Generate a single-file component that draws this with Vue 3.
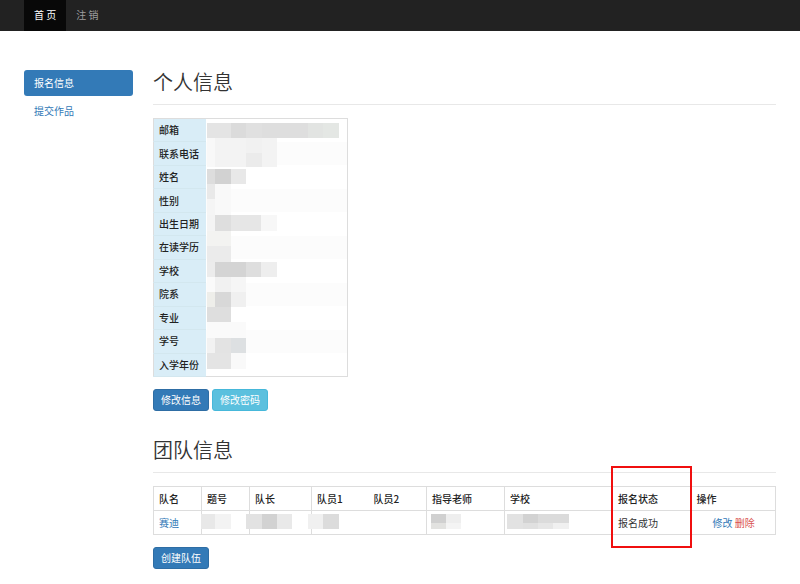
<script setup>
// Each block is [x, y, width, height, grey level]
const profileMask = [
  [0, 5, 24, 15, '#e4e4e4'], [24, 5, 15, 15, '#dbdbdb'], [39, 5, 16, 15, '#e0e0e0'],
  [55, 5, 46, 15, '#dedede'], [101, 5, 15, 15, '#e2e4e2'], [116, 5, 16, 15, '#e4e7e4'],
  [0, 20, 8, 29, '#f8f8f8'], [8, 20, 31, 29, '#f3f3f3'], [39, 20, 16, 15, '#f1f1f1'],
  [55, 20, 15, 29, '#f3f3f3'], [39, 35, 16, 14, '#ebebeb'],
  [0, 51, 8, 15, '#dddddd'], [8, 51, 16, 15, '#d2d2d2'], [24, 51, 15, 15, '#e8e8e8'],
  [0, 66, 8, 15, '#e9e9e9'], [8, 66, 16, 31, '#f9f9f9'], [0, 81, 8, 16, '#f5f5f5'],
  [0, 97, 8, 16, '#f4f4f4'], [8, 97, 16, 16, '#dedede'], [24, 97, 30, 16, '#e6e6e6'], [54, 97, 16, 16, '#f7f7f7'],
  [0, 113, 24, 15, '#f3f3f1'], [0, 128, 24, 16, '#ebebeb'],
  [0, 144, 8, 15, '#ececec'], [8, 144, 31, 15, '#d4d4d4'], [39, 144, 15, 15, '#dedede'], [54, 144, 16, 15, '#eeeeee'],
  [0, 159, 8, 15, '#fafafa'], [8, 159, 16, 15, '#f1f1f1'], [24, 159, 15, 15, '#f6f6f6'],
  [0, 174, 8, 15, '#eeeeea'], [8, 174, 16, 15, '#d8d8d8'], [24, 174, 15, 15, '#f0f0f0'],
  [0, 189, 24, 15, '#dedede'], [0, 204, 39, 16, '#fafafa'],
  [0, 220, 8, 15, '#f2f2f2'], [8, 220, 16, 15, '#e3e3e3'], [24, 220, 15, 15, '#dde0e2'],
  [0, 235, 24, 16, '#e4e4e4'], [24, 235, 15, 16, '#f9f9f9']
]
const teamMask = [
  [48, 0, 14, 15, '#e8e8e8'], [62, 0, 16, 15, '#f3f3f3'],
  [93, 0, 16, 15, '#e2e2e2'], [109, 0, 15, 15, '#d2d2d2'], [124, 0, 15, 15, '#e9e9e9'],
  [155, 0, 15, 15, '#f0f0f0'], [170, 0, 16, 15, '#dcdcdc'],
  [278, 0, 15, 9, '#d0d0d0'], [278, 9, 15, 6, '#e2e2e0'], [293, 0, 15, 9, '#eeeeee'], [293, 9, 15, 6, '#f4f4f4'],
  [354, 0, 16, 15, '#e2e2e2'], [370, 0, 15, 9, '#d2d2d2'], [385, 0, 31, 9, '#dbdbdb'],
  [370, 9, 15, 6, '#e0e0e0'], [385, 9, 15, 6, '#e6e6e6'], [400, 9, 16, 6, '#f0f0f0']
]
const fields = ['邮箱', '联系电话', '姓名', '性别', '出生日期', '在读学历', '学校', '院系', '专业', '学号', '入学年份']
const columns = ['队名', '题号', '队长', '队员1', '队员2', '指导老师', '学校']
</script>

<template>
  <header class="navbar">
    <nav>
      <a class="active" href="#">首 页</a>
      <a href="#">注 销</a>
    </nav>
  </header>

  <div class="layout">
    <aside class="sidebar">
      <a class="active" href="#">报名信息</a>
      <a href="#">提交作品</a>
    </aside>

    <main>
      <section>
        <h1>个人信息</h1>
        <div class="profile-wrap">
          <table class="profile">
            <tbody>
              <tr v-for="field in fields" :key="field">
                <th scope="row">{{ field }}</th>
                <td></td>
              </tr>
            </tbody>
          </table>
          <svg class="mask profile-mask" width="132" height="252" aria-hidden="true">
            <rect v-for="(b, i) in profileMask" :key="i" :x="b[0]" :y="b[1]" :width="b[2]" :height="b[3]" :fill="b[4]" />
          </svg>
        </div>
        <div class="actions">
          <button type="button" class="btn primary">修改信息</button>
          <button type="button" class="btn info">修改密码</button>
        </div>
      </section>

      <section class="team-section">
        <h1>团队信息</h1>
        <div class="team-wrap">
          <table class="team">
            <colgroup>
              <col class="c-name"><col class="c-topic"><col class="c-leader"><col class="c-member">
              <col class="c-member2"><col class="c-teacher"><col class="c-school"><col class="c-status"><col>
            </colgroup>
            <thead>
              <tr>
                <th v-for="(name, i) in columns" :key="i" scope="col">{{ name }}</th>
                <th class="status" scope="col">报名状态<span class="highlight"></span></th>
                <th scope="col">操作</th>
              </tr>
            </thead>
            <tbody>
              <tr>
                <td><a href="#">赛迪</a></td>
                <td></td><td></td><td></td><td></td><td></td><td></td>
                <td>报名成功</td>
                <td class="ops"><a href="#">修改</a> <a class="danger" href="#">删除</a></td>
              </tr>
            </tbody>
          </table>
          <svg class="mask team-mask" width="416" height="15" aria-hidden="true">
            <rect v-for="(b, i) in teamMask" :key="i" :x="b[0]" :y="b[1]" :width="b[2]" :height="b[3]" :fill="b[4]" />
          </svg>
        </div>
        <div class="actions">
          <button type="button" class="btn primary">创建队伍</button>
        </div>
      </section>
    </main>
  </div>
</template>

<style>
body {
  background: #fff;
  color: #333;
  font: 10px/14px "Noto Sans CJK SC", "Noto Sans", sans-serif;
}
</style>

<style scoped>
* {
  box-sizing: border-box;
}
a {
  color: #337ab7;
  text-decoration: none;
}
.navbar {
  background: #222;
  padding: 0 24px;
}
.navbar nav {
  display: flex;
}
.navbar a {
  color: #9d9d9d;
  padding: 8px 10px 9px;
}
.navbar .active {
  background: #080808;
  color: #fff;
}
.layout {
  display: flex;
  align-items: flex-start;
  gap: 20px;
  padding: 39px 24px 14px;
}
.sidebar {
  flex: 0 0 109px;
  display: flex;
  flex-direction: column;
  gap: 2px;
}
.sidebar a {
  padding: 6px 10px;
  border-radius: 3px;
}
.sidebar .active {
  background: #337ab7;
  color: #fff;
}
main {
  flex: 1;
  min-width: 0;
}
h1 {
  margin: 0 0 13px;
  padding-bottom: 10px;
  border-bottom: 1px solid #e8e8e8;
  font-size: 20px;
  line-height: 24px;
  font-weight: 350;
}
table {
  border-collapse: collapse;
}
th,
td {
  padding: 0 5px;
  text-align: left;
  font-weight: 400;
  white-space: nowrap;
}
.profile-wrap,
.team-wrap {
  position: relative;
}
.profile {
  width: 195px;
  height: 259px;
  border: 1px solid #ddd;
  color: #222;
}
.profile th {
  width: 52px;
  background: #d9edf7;
  border-bottom: 1px solid #d3e7ef;
  font-weight: 500;
}
.profile tr:nth-child(even) td {
  background: #fcfcfc;
}
.mask {
  position: absolute;
}
.profile-mask {
  top: 0;
  left: 54px;
}
.team-mask {
  top: 28px;
  left: 0;
}
.actions {
  display: flex;
  gap: 3px;
  margin-top: 12px;
}
.btn {
  height: 22px;
  padding: 0 7px;
  border: 1px solid #2e6da4;
  border-radius: 3px;
  background: #337ab7;
  color: #fff;
  font: inherit;
}
.btn.info {
  border-color: #46b8da;
  background: #5bc0de;
}
.team-section {
  margin-top: 27px;
}
.team {
  width: 100%;
  table-layout: fixed;
}
.team tr {
  height: 24px;
}
.team th,
.team td {
  border: 1px solid #ddd;
}
.team th {
  color: #222;
  font-weight: 500;
}
.team th:nth-child(4),
.team td:nth-child(4) {
  border-right: 0;
}
.team th:nth-child(5),
.team td:nth-child(5) {
  border-left: 0;
}
.team th:nth-child(8),
.team td:nth-child(8) {
  border-right: 0;
}
.team th:nth-child(9),
.team td:nth-child(9) {
  border-left: 0;
}
.c-name,
.c-topic {
  width: 48px;
}
.c-leader {
  width: 62px;
}
.c-member {
  width: 57px;
}
.c-member2 {
  width: 58px;
}
.c-teacher {
  width: 78px;
}
.c-school {
  width: 108px;
}
.c-status {
  width: 79px;
}
.status {
  position: relative;
}
.highlight {
  position: absolute;
  top: -21px;
  left: -2px;
  width: 81px;
  height: 82px;
  border: 2px solid #f00f0f;
}
.team .ops {
  padding-left: 21px;
}
.danger {
  color: #d9534f;
}
</style>
